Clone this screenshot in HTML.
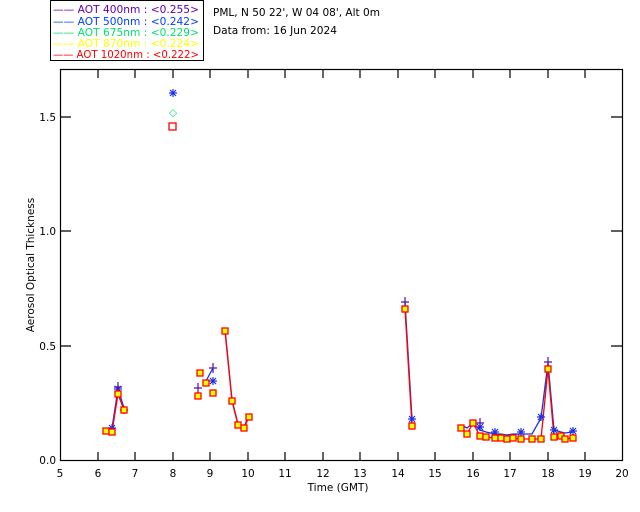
<!DOCTYPE html>
<html><head><style>
body{margin:0;background:#fff;width:640px;height:512px;overflow:hidden}
svg{display:block}
text{font-family:"DejaVu Sans","Liberation Sans",sans-serif;font-size:10.5px}
</style></head><body>
<svg width="640" height="512" xmlns="http://www.w3.org/2000/svg">
<defs>
<g id="st"><path d="M-4 0h8M0-4v8M-3-3l6 6M-3 3l6-6" stroke="#2030e0" stroke-width="1.2"/></g>
<g id="pl"><path d="M-4 0h8M0-5v10" stroke="#5010b0" stroke-width="1.2"/></g>
</defs>
<!-- legend -->
<rect x="50.5" y="0.5" width="153" height="60" fill="none" stroke="#000"/>
<g>
<text x="53" y="13" fill="#6000b0" textLength="146" lengthAdjust="spacingAndGlyphs">——  AOT  400nm : &lt;0.255&gt;</text>
<text x="53" y="25" fill="#0040ff" textLength="146" lengthAdjust="spacingAndGlyphs">——  AOT  500nm : &lt;0.242&gt;</text>
<text x="53" y="36" fill="#00e070" textLength="146" lengthAdjust="spacingAndGlyphs">——  AOT  675nm : &lt;0.229&gt;</text>
<text x="53" y="47" fill="#ffff00" textLength="146" lengthAdjust="spacingAndGlyphs">——  AOT  870nm : &lt;0.224&gt;</text>
<text x="53" y="58" fill="#ff0000" textLength="146" lengthAdjust="spacingAndGlyphs">——  AOT 1020nm : &lt;0.222&gt;</text>
</g>
<text x="213" y="16" fill="#000" textLength="167" lengthAdjust="spacingAndGlyphs">PML, N 50 22', W 04 08', Alt 0m</text>
<text x="213" y="34" fill="#000" textLength="124" lengthAdjust="spacingAndGlyphs">Data from: 16 Jun 2024</text>
<!-- axes -->
<g stroke="#000" stroke-width="1.2" fill="none">
<rect x="60.5" y="69.5" width="562" height="391"/>
<path d="M98 460v-8M135 460v-8M173 460v-8M210 460v-8M248 460v-8M285 460v-8M323 460v-8M360 460v-8M398 460v-8M435 460v-8M473 460v-8M510 460v-8M548 460v-8M585 460v-8
M98 70v8M135 70v8M173 70v8M210 70v8M248 70v8M285 70v8M323 70v8M360 70v8M398 70v8M435 70v8M473 70v8M510 70v8M548 70v8M585 70v8
M60 346h11M60 231h11M60 117h11M622 346h-11M622 231h-11M622 117h-11"/>
</g>
<g fill="#000" text-anchor="middle">
<text x="60" y="477">5</text><text x="98" y="477">6</text><text x="135" y="477">7</text><text x="173" y="477">8</text><text x="210" y="477">9</text><text x="248" y="477">10</text><text x="285" y="477">11</text><text x="323" y="477">12</text><text x="360" y="477">13</text><text x="398" y="477">14</text><text x="435" y="477">15</text><text x="473" y="477">16</text><text x="510" y="477">17</text><text x="548" y="477">18</text><text x="585" y="477">19</text><text x="622" y="477">20</text>
<text x="338" y="491">Time (GMT)</text>
</g>
<g fill="#000" text-anchor="end">
<text x="56" y="464">0.0</text><text x="56" y="350">0.5</text><text x="56" y="235">1.0</text><text x="56" y="121">1.5</text>
</g>
<text transform="translate(34,265) rotate(-90)" text-anchor="middle" fill="#000">Aerosol Optical Thickness</text>
<!-- blue/purple lines -->
<g fill="none" stroke="#2030e0" stroke-width="1.3">
<polyline points="106,429 112,428 118,389 124,408"/>
<polyline points="206,381 213,368"/>
<polyline points="225,329 232,400 238,424 244,427 249,415"/>
<polyline points="405,302 412,419"/>
<polyline points="461,425 467,428 473,423 480,430 486,432 495,434 501,434 507,435 513,434 521,434 532,434 541,418 548,363 554,430 561,432 565,433 573,432"/>
</g>
<!-- red lines -->
<g fill="none" stroke="#ff0000" stroke-width="1.3">
<polyline points="106,431 112,432 118,394 124,410"/>
<polyline points="225,331 232,401 238,425 244,428 249,417"/>
<polyline points="405,309 412,426"/>
<polyline points="461,428 467,434 473,423 480,436 486,437 495,438 501,438 507,439 513,438 521,439 532,439 541,439 548,369 554,437 561,436 565,439 573,438"/>
</g>
<!-- stars -->
<use href="#st" x="173" y="93"/><use href="#st" x="213" y="381"/><use href="#st" x="118" y="389"/><use href="#st" x="124" y="410"/><use href="#st" x="112" y="428"/>
<use href="#st" x="412" y="419"/><use href="#st" x="480" y="427"/><use href="#st" x="541" y="417"/><use href="#st" x="554" y="430"/><use href="#st" x="573" y="431"/><use href="#st" x="495" y="432"/><use href="#st" x="521" y="432"/>
<use href="#pl" x="118" y="387"/><use href="#pl" x="198" y="388"/><use href="#pl" x="213" y="368"/><use href="#pl" x="405" y="302"/><use href="#pl" x="548" y="362"/><use href="#pl" x="480" y="423"/>
<text x="173" y="116" fill="#00e070" font-size="10" text-anchor="middle">◇</text>
<!-- red squares -->
<g fill="#ffff00" stroke="#ff0000" stroke-width="1.3">
<rect x="169" y="123" width="7" height="7" fill="none"/>
<rect x="103" y="428" width="6" height="6"/><rect x="109" y="429" width="6" height="6"/><rect x="115" y="391" width="6" height="6"/><rect x="121" y="407" width="6" height="6"/>
<rect x="195" y="393" width="6" height="6"/><rect x="197" y="370" width="6" height="6"/><rect x="203" y="380" width="6" height="6"/><rect x="210" y="390" width="6" height="6"/>
<rect x="222" y="328" width="6" height="6"/><rect x="229" y="398" width="6" height="6"/><rect x="235" y="422" width="6" height="6"/><rect x="241" y="425" width="6" height="6"/><rect x="246" y="414" width="6" height="6"/>
<rect x="402" y="306" width="6" height="6"/><rect x="409" y="423" width="6" height="6"/>
<rect x="458" y="425" width="6" height="6"/><rect x="464" y="431" width="6" height="6"/><rect x="470" y="420" width="6" height="6"/><rect x="477" y="433" width="6" height="6"/><rect x="483" y="434" width="6" height="6"/><rect x="492" y="435" width="6" height="6"/><rect x="498" y="435" width="6" height="6"/><rect x="504" y="436" width="6" height="6"/><rect x="510" y="435" width="6" height="6"/><rect x="518" y="436" width="6" height="6"/><rect x="529" y="436" width="6" height="6"/><rect x="538" y="436" width="6" height="6"/><rect x="545" y="366" width="6" height="6"/><rect x="551" y="434" width="6" height="6"/><rect x="558" y="433" width="6" height="6"/><rect x="562" y="436" width="6" height="6"/><rect x="570" y="435" width="6" height="6"/>
</g>
</svg>
</body></html>
